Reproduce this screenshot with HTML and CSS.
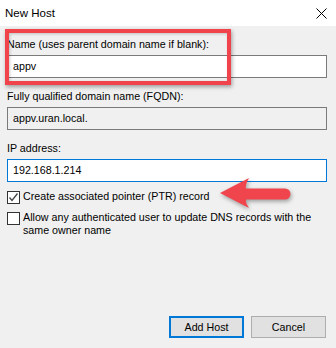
FILE: index.html
```
<!DOCTYPE html>
<html lang="en">
<head>
    <meta charset="UTF-8">
    <title>New Host</title>
    <link rel="stylesheet" href="styles.css">
</head>
<body>
    <div class="window">
        <div class="titlebar">
            <span class="title">New Host</span>
            <svg class="close-icon" width="11" height="11" viewBox="0 0 11 11">
                <path d="M0.5 0.5 L10.5 10.5 M10.5 0.5 L0.5 10.5" stroke="#000" stroke-width="1" fill="none"/>
            </svg>
        </div>

        <div class="content">
            <!-- Campos -->
            <div class="field">
                <label>Name (uses parent domain name if blank):</label>
                <div class="textbox">appv</div>
            </div>
            <div class="field">
                <label>Fully qualified domain name (FQDN):</label>
                <div class="textbox readonly">appv.uran.local.</div>
            </div>
            <div class="field">
                <label>IP address:</label>
                <div class="textbox focused">192.168.1.214</div>
            </div>

            <!-- Opções -->
            <div class="check-row">
                <span class="checkbox">
                    <svg width="11" height="11" viewBox="0 0 11 11">
                        <path d="M1.5 5.5 L4 8.5 L9.5 1.5" stroke="#444" stroke-width="1.3" fill="none"/>
                    </svg>
                </span>
                <span class="check-label">Create associated pointer (PTR) record</span>
            </div>
            <div class="check-row">
                <span class="checkbox"></span>
                <span class="check-label">Allow any authenticated user to update DNS records with the same owner name</span>
            </div>

            <!-- Anotações -->
            <div class="highlight"></div>
            <svg class="arrow" width="80" height="38" viewBox="0 0 80 38">
                <path d="M2 17 L31 2 Q27 9 28 12.5 L67 12.5 A5.5 5.5 0 0 1 67 23.5 L28 23.5 Q27 26 31 32 Z" fill="#f0454d"/>
            </svg>
        </div>

        <div class="buttons">
            <button class="btn default">Add Host</button>
            <button class="btn">Cancel</button>
        </div>
    </div>
</body>
</html>
```

FILE: styles.css
```
body {
    margin: 0;
    background-color: #f0f0f0;
    font-family: "Liberation Sans", Arial, sans-serif;
    font-size: 10.7px;
    color: #000;
}

.window {
    display: flex;
    flex-direction: column;
    width: 336px;
    height: 348px;
}

.titlebar {
    display: flex;
    align-items: center;
    justify-content: space-between;
    height: 26px;
    padding: 0 9px 0 5px;
    background-color: #fff;
}

.title {
    font-size: 11.5px;
    line-height: 15px;
}

.close-icon {
    display: block;
}

.content {
    position: relative;
    flex: 1;
    padding: 0 9px 0 7px;
}

.field {
    margin-top: 11px;
}

.field label {
    display: block;
    line-height: 15px;
}

.textbox {
    box-sizing: border-box;
    height: 23px;
    margin-top: 3px;
    padding-left: 5px;
    border: 1px solid #7a7a7a;
    background-color: #fff;
    line-height: 21px;
}

.textbox.readonly {
    background-color: #f0f0f0;
}

.textbox.focused {
    border-color: #0078d7;
}

.check-row {
    display: flex;
    align-items: flex-start;
    margin-top: 8px;
}

.check-row + .check-row {
    margin-top: 7px;
}

.checkbox {
    box-sizing: border-box;
    flex: none;
    width: 13px;
    height: 13px;
    margin-top: 1px;
    border: 1px solid #333;
    background-color: #fff;
}

.checkbox svg {
    display: block;
}

.check-label {
    margin-left: 3px;
    line-height: 13px;
}

.highlight {
    position: absolute;
    left: 5px;
    top: 3px;
    width: 226px;
    height: 56px;
    box-sizing: border-box;
    border: 4px solid #f0434b;
    box-shadow: 1px 2px 4px rgba(0, 0, 0, 0.35), inset 1px 1px 3px rgba(0, 0, 0, 0.2);
}

.arrow {
    position: absolute;
    left: 218px;
    top: 150px;
    filter: drop-shadow(1px 2px 2px rgba(0, 0, 0, 0.35));
}

.buttons {
    display: flex;
    justify-content: flex-end;
    gap: 7px;
    padding: 0 10px 10px 0;
}

.btn {
    box-sizing: border-box;
    width: 75px;
    height: 22px;
    padding: 0;
    border: 1px solid #adadad;
    background-color: #e1e1e1;
    font-family: "Liberation Sans", Arial, sans-serif;
    font-size: 10.7px;
    color: #000;
}

.btn.default {
    border: 2px solid #0078d7;
}
```
